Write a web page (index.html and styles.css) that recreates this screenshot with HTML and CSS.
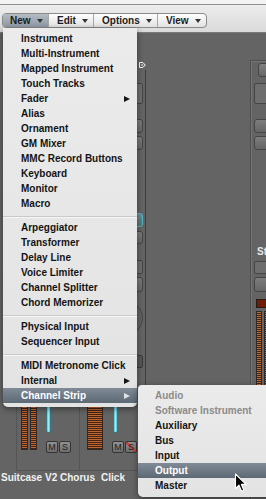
FILE: index.html
```html
<!DOCTYPE html>
<html>
<head>
<meta charset="utf-8">
<link rel="stylesheet" href="styles.css">
</head>
<body>
<div class="app">
  <div class="toolbar">
    <div class="seg-group">
      <div class="seg seg-new">New<span class="caret"></span></div>
      <div class="seg seg-edit">Edit<span class="caret"></span></div>
      <div class="seg seg-options">Options<span class="caret"></span></div>
      <div class="seg seg-view">View<span class="caret"></span></div>
    </div>
  </div>
  <div class="workspace">
    <div class="left-pane">
      <div class="pane-head">
        <svg class="io-icon" viewBox="0 0 7 6" width="7" height="6"><path d="M0.5 0.5 H3.8 L6.3 3 L3.8 5.5 H0.5 Z M2.2 3 H4.2" fill="none" stroke="#fff" stroke-width="1"/></svg>
      </div>
      <div class="channels">
        <div class="channel ch-a">
          <div class="strip">
            <div class="strip-bottom">
              <div class="meters"><div class="meter"></div><div class="meter"></div></div>
              <div class="fader-col">
                <div class="fader"></div>
                <div class="ms"><span class="btn-ms">M</span><span class="btn-ms">S</span></div>
              </div>
            </div>
          </div>
          <div class="label">Suitcase V2 Chorus</div>
        </div>
        <div class="channel ch-b">
          <div class="strip">
            <div class="ctl ctl-box c1"></div>
            <div class="ctl ctl-btn c2"></div>
            <div class="ctl ctl-btn c3"></div>
            <div class="ctl ctl-btn ctl-cyan c4"></div>
            <div class="ctl ctl-btn c5"></div>
            <div class="ctl ctl-box c6"></div>
            <div class="ctl ctl-btn c7"></div>
            <div class="knob"></div>
            <div class="ctl ctl-dark c9"></div>
            <div class="strip-bottom">
              <div class="meters"><div class="meter"></div></div>
              <div class="fader-col">
                <div class="fader"></div>
                <div class="ms"><span class="btn-ms">M</span><span class="btn-ms btn-slash">S</span></div>
              </div>
            </div>
          </div>
          <div class="label">Click</div>
        </div>
      </div>
    </div>
    <div class="middle"></div>
    <div class="right-pane">
      <div class="r-small"></div>
      <div class="r-box r1"></div>
      <div class="r-btn r2"></div>
      <div class="r-btn r3"></div>
      <div class="r-label">St</div>
      <div class="r-box r5"></div>
      <div class="r-btn r6"></div>
      <div class="r-red"></div>
      <div class="r-meters"><div class="meter"></div><div class="meter"></div></div>
    </div>
  </div>

  <div class="menu main-menu">
    <div class="item">Instrument</div>
    <div class="item">Multi-Instrument</div>
    <div class="item">Mapped Instrument</div>
    <div class="item">Touch Tracks</div>
    <div class="item">Fader<span class="sub-arrow"></span></div>
    <div class="item">Alias</div>
    <div class="item">Ornament</div>
    <div class="item">GM Mixer</div>
    <div class="item">MMC Record Buttons</div>
    <div class="item">Keyboard</div>
    <div class="item">Monitor</div>
    <div class="item">Macro</div>
    <div class="sep"></div>
    <div class="item">Arpeggiator</div>
    <div class="item">Transformer</div>
    <div class="item">Delay Line</div>
    <div class="item">Voice Limiter</div>
    <div class="item">Channel Splitter</div>
    <div class="item">Chord Memorizer</div>
    <div class="sep"></div>
    <div class="item">Physical Input</div>
    <div class="item">Sequencer Input</div>
    <div class="sep"></div>
    <div class="item">MIDI Metronome Click</div>
    <div class="item">Internal<span class="sub-arrow"></span></div>
    <div class="item hl">Channel Strip<span class="sub-arrow"></span></div>
  </div>

  <div class="menu sub-menu">
    <div class="item dis">Audio</div>
    <div class="item dis">Software Instrument</div>
    <div class="item">Auxiliary</div>
    <div class="item">Bus</div>
    <div class="item">Input</div>
    <div class="item hl">Output</div>
    <div class="item">Master</div>
  </div>

  <svg class="cursor" viewBox="0 0 13 20" width="13" height="20">
    <path d="M1.5 1 L1.5 15.5 L5 12.2 L7.6 18.2 L9.8 17.2 L7.3 11.4 L12 11.4 Z" fill="#000" stroke="#fff" stroke-width="1.1" stroke-linejoin="round"/>
  </svg>
</div>
</body>
</html>
```
FILE: styles.css
```css
body {
  margin: 0;
  background: #646464;
  font-family: "Liberation Sans", Arial, sans-serif;
}

.app {
  position: relative;
  width: 266px;
  height: 499px;
  overflow: hidden;
  display: flex;
  flex-direction: column;
  background: #646464;
}

/* toolbar */
.toolbar {
  height: 33px;
  flex: none;
  box-sizing: border-box;
  padding: 13px 0 0 2px;
  background: linear-gradient(#f3f3f3 0, #f3f3f3 4px, #8f8f8f 4px, #8f8f8f 5px, #ededed 5px, #dadada 100%);
  border-bottom: 1px solid #7a7a7a;
}

.seg-group {
  display: flex;
  width: max-content;
  height: 15px;
  box-sizing: border-box;
  border: 1px solid #8a8a8a;
  border-radius: 4px;
  background: linear-gradient(#fefefe, #e1e1e1);
  overflow: hidden;
}

.seg {
  box-sizing: border-box;
  display: flex;
  align-items: center;
  justify-content: space-between;
  padding: 0 5px 0 8px;
  font-size: 10px;
  font-weight: bold;
  color: #1c1c1c;
  border-left: 1px solid #a8a8a8;
}

.seg-new {
  width: 45px;
  border-left: none;
  padding-left: 7px;
  background: linear-gradient(#b3bbc3, #8f99a3);
}
.seg-edit { width: 45px; }
.seg-options { width: 64px; }
.seg-view { width: 49px; }

.caret {
  width: 0;
  height: 0;
  border-top: 4px solid #333;
  border-left: 3px solid transparent;
  border-right: 3px solid transparent;
}

/* workspace */
.workspace {
  flex: 1;
  min-height: 0;
  display: flex;
}

.left-pane {
  width: 146px;
  flex: none;
  display: flex;
  flex-direction: column;
}

.pane-head {
  height: 37px;
  display: flex;
  justify-content: flex-end;
  align-items: flex-start;
}

.io-icon {
  margin-top: 29px;
  display: block;
}

.channels {
  display: flex;
  padding-left: 16px;
}

.channel {
  display: flex;
  flex-direction: column;
}

.ch-a { width: 64px; }
.ch-b { width: 66px; }

.strip {
  height: 401px;
  box-sizing: border-box;
  border: 1px solid #555;
  border-top: none;
  display: flex;
  flex-direction: column;
}

.ch-b .strip {
  border-left: none;
  border-right-color: #3b3b3b;
}

.label {
  height: 12px;
  line-height: 12px;
  margin-top: 1px;
  display: flex;
  justify-content: center;
  white-space: nowrap;
  color: #f2f2f2;
  font-size: 10px;
  font-weight: bold;
}

.strip-bottom {
  margin-top: auto;
  display: flex;
  align-items: flex-end;
  padding: 0 0 17px 4px;
}

.ch-b .strip-bottom { padding-left: 7px; }

.meters {
  display: flex;
  gap: 2px;
  margin-bottom: 3px;
}

.meter {
  width: 7px;
  height: 80px;
  box-sizing: border-box;
  border: 1px solid #2e2a28;
  background: repeating-linear-gradient(#c4672f 0, #c4672f 1px, #3f2417 1px, #3f2417 2px);
}

.ch-b .meter { width: 16px; }

.fader-col {
  margin-left: 9px;
  display: flex;
  flex-direction: column;
}

.fader {
  width: 3px;
  height: 60px;
  margin-bottom: 8px;
  border: 1px solid #3d7580;
  border-radius: 0 0 2px 2px;
  background: linear-gradient(90deg, #52c3d6, #9beaf4, #52c3d6);
}

.ch-b .fader { margin-left: 1px; }

.ms {
  display: flex;
  gap: 1px;
}

.btn-ms {
  position: relative;
  width: 12px;
  height: 12px;
  box-sizing: border-box;
  border: 1px solid #343434;
  border-radius: 2px;
  background: linear-gradient(#929292, #6c6c6c);
  font-size: 9px;
  line-height: 10px;
  text-align: center;
  color: #222;
}

.btn-slash {
  background:
    linear-gradient(to top right, transparent 44%, #cf3a3a 44%, #cf3a3a 56%, transparent 56%),
    linear-gradient(#929292, #6c6c6c);
}

/* strip B top controls */
.ctl {
  flex: none;
  margin: 0 2px 0 4px;
  box-sizing: border-box;
  border: 1px solid #454545;
  border-radius: 2px;
}

.ctl-box { background: #6e6e6e; }
.ctl-btn { background: linear-gradient(#7d7d7d, #666); border-radius: 3px; }
.ctl-cyan { border-color: #4fb7c8; background: linear-gradient(#6f8e94, #5a6e72); }
.ctl-dark { background: #565656; border-color: #3a3a3a; }

.c1 { margin-top: 13px; height: 21px; }
.c2 { margin-top: 15px; height: 14px; }
.c3 { margin-top: 3px; height: 14px; }
.c4 { margin-top: 63px; height: 14px; }
.c5 { margin-top: 4px; height: 13px; }
.c6 { margin-top: 16px; height: 14px; }
.c7 { margin-top: 3px; height: 15px; }
.c9 { margin-top: 20px; height: 13px; }

.knob {
  flex: none;
  align-self: flex-end;
  margin: 9px 2px 0 0;
  width: 34px;
  height: 34px;
  box-sizing: border-box;
  border: 1px solid #474747;
  border-radius: 50%;
  background: #606060;
}

.middle {
  flex: 1;
}

/* right pane */
.right-pane {
  width: 16px;
  flex: none;
  margin-top: 27px;
  box-sizing: border-box;
  border-top: 1px solid #4f4f4f;
  border-left: 1px solid #4f4f4f;
  box-shadow: inset 1px 1px 0 #747474;
  display: flex;
  flex-direction: column;
  align-items: flex-start;
}

.r-small {
  flex: none;
  margin: 2px 0 0 7px;
  width: 12px;
  height: 14px;
  box-sizing: border-box;
  border: 1px solid #444;
  border-radius: 3px;
  background: linear-gradient(#808080, #676767);
}

.r-box, .r-btn {
  flex: none;
  margin-left: 3px;
  width: 20px;
  box-sizing: border-box;
  border: 1px solid #454545;
  border-radius: 2px;
}

.r-box { background: #6e6e6e; }
.r-btn { background: linear-gradient(#7d7d7d, #666); border-radius: 3px; }

.r1 { margin-top: 6px; height: 21px; }
.r2 { margin-top: 15px; height: 14px; }
.r3 { margin-top: 3px; height: 14px; }
.r5 { margin-top: 3px; height: 13px; }
.r6 { margin-top: 3px; height: 15px; }

.r-label {
  flex: none;
  margin: 96px 0 0 6px;
  height: 12px;
  line-height: 12px;
  white-space: nowrap;
  color: #e6e6e6;
  font-size: 10px;
  font-weight: bold;
}

.r-red {
  flex: none;
  margin: 7px 0 0 5px;
  width: 14px;
  height: 9px;
  box-sizing: border-box;
  border: 1px solid #2a1a14;
  background: #6b1d08;
}

.r-meters {
  flex: none;
  margin: 3px 0 0 5px;
  display: flex;
  gap: 2px;
}

.r-meters .meter { width: 6px; height: 90px; }

/* menus */
.menu {
  position: absolute;
  box-sizing: border-box;
  background: linear-gradient(#ebebeb, #e3e3e3);
  box-shadow: 0 2px 6px rgba(0, 0, 0, 0.45);
  font-size: 10px;
  font-weight: bold;
  color: #141414;
}

.main-menu {
  left: 3px;
  top: 28px;
  width: 134px;
  padding: 3px 0 4px;
  border-radius: 0 0 5px 5px;
}

.sub-menu {
  left: 138px;
  top: 385px;
  width: 134px;
  padding: 3px 0 4px;
  border-radius: 4px 0 0 5px;
}

.item {
  height: 15px;
  display: flex;
  align-items: center;
  padding-left: 18px;
  white-space: nowrap;
}

.sub-menu .item { padding-left: 17px; }

.item.hl {
  background: linear-gradient(#808b97, #5c6874);
  color: #fff;
}

.item.dis { color: #8b8b8b; }

.sep {
  height: 9px;
  background: linear-gradient(transparent 5px, #c9c9c9 5px, #c9c9c9 6px, #f6f6f6 6px, #f6f6f6 7px, transparent 7px);
}

.sub-arrow {
  margin-left: auto;
  margin-right: 7px;
  width: 0;
  height: 0;
  border-left: 6px solid #141414;
  border-top: 3px solid transparent;
  border-bottom: 3px solid transparent;
}

.item.hl .sub-arrow { border-left-color: #dfe3e7; }

.cursor {
  position: absolute;
  left: 234px;
  top: 473px;
  display: block;
}
```
